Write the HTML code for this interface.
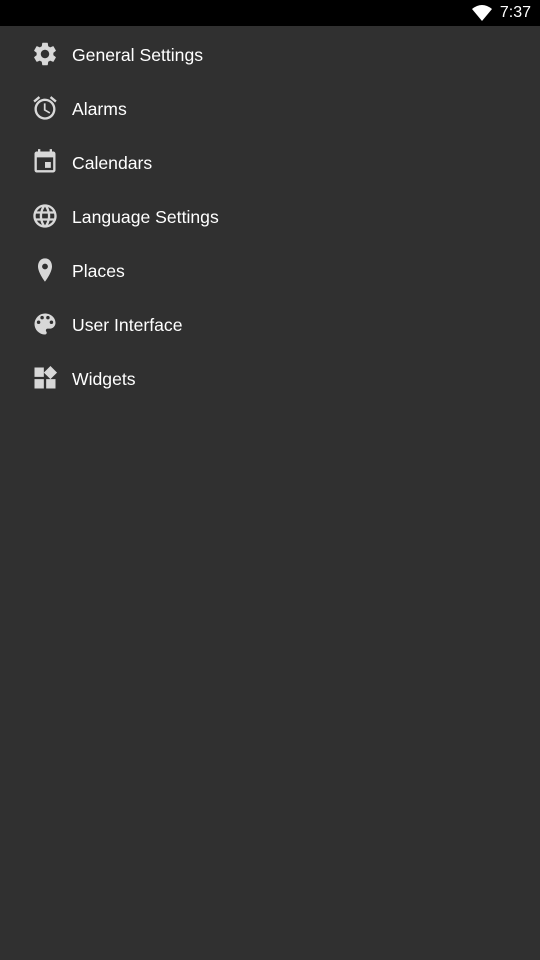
<!DOCTYPE html>
<html><head><style>
body{margin:0;width:540px;height:960px;background:#303030;font-family:"Liberation Sans",sans-serif;overflow:hidden;position:relative}
.sb{height:26px;background:#000;position:relative}
.sb span{position:absolute;right:9px;top:4px;color:#fff;font-size:16px}
.sb svg{position:absolute;left:472px;top:5px}
.row{position:absolute;left:0;height:54px;width:540px}
.row svg{position:absolute;left:31px;top:13px;width:28px;height:28px;fill:#d8d8d8}
.row div{position:absolute;left:72px;top:18px;color:#fff;font-size:17.6px}
</style></head><body>
<div class="sb"><svg width="20" height="16" viewBox="0 0 20 16"><path d="M10 16L0 4Q10-4 20 4Z" fill="#fff"/></svg><span>7:37</span></div>
<div class="row" style="top:27px"><svg viewBox="0 0 24 24"><path d="M19.14 12.94c.04-.3.06-.61.06-.94 0-.32-.02-.64-.07-.94l2.03-1.58a.49.49 0 0 0 .12-.61l-1.92-3.32a.49.49 0 0 0-.59-.22l-2.39.96c-.5-.38-1.03-.7-1.620-.94l-.36-2.54a.48.48 0 0 0-.48-.41h-3.84c-.24 0-.43.17-.47.41l-.36 2.54c-.59.24-1.13.57-1.62.94l-2.39-.96a.48.48 0 0 0-.59.22L2.74 8.87c-.12.21-.08.47.12.61l2.03 1.58c-.05.3-.09.63-.09.94s.02.64.07.94l-2.03 1.58a.49.49 0 0 0-.12.61l1.92 3.32c.12.22.37.29.59.22l2.39-.96c.5.38 1.03.7 1.62.94l.36 2.54c.05.24.24.41.48.41h3.84c.24 0 .44-.17.47-.41l.36-2.54c.59-.24 1.13-.56 1.62-.94l2.39.96c.22.08.47 0 .59-.22l1.92-3.32c.12-.22.07-.47-.12-.61l-2.010-1.58zM12 15.6c-1.98 0-3.6-1.62-3.6-3.6s1.62-3.6 3.6-3.6 3.6 1.62 3.6 3.6-1.62 3.6-3.6 3.6z"/></svg><div>General Settings</div></div>
<div class="row" style="top:81px"><svg viewBox="0 0 24 24"><path d="M22 5.72l-4.6-3.86-1.29 1.53 4.6 3.86L22 5.72zM7.88 3.39L6.6 1.86 2 5.71l1.29 1.53 4.59-3.85zM12.5 8H11v6l4.75 2.85.75-1.23-4-2.37V8zM12 4c-4.97 0-9 4.03-9 9s4.02 9 9 9a9 9 0 0 0 0-18zm0 16c-3.87 0-7-3.130-7-7s3.13-7 7-7 7 3.13 7 7-3.13 7-7 7z"/></svg><div>Alarms</div></div>
<div class="row" style="top:135px"><svg viewBox="0 0 24 24"><path d="M17 12h-5v5h5v-5zM16 1v2H8V1H6v2H5c-1.11 0-1.99.9-1.99 2L3 19a2 2 0 0 0 2 2h14c1.1 0 2-.9 2-2V5c0-1.1-.9-2-2-2h-1V1h-2zm3 18H5V8h14v11z"/></svg><div>Calendars</div></div>
<div class="row" style="top:189px"><svg viewBox="0 0 24 24"><path d="M11.99 2C6.47 2 2 6.48 2 12s4.47 10 9.99 10C17.52 22 22 17.52 22 12S17.52 2 11.99 2zm6.93 6h-2.95a15.65 15.65 0 0 0-1.38-3.56A8.030 8.03 0 0 1 18.92 8zM12 4.04c.83 1.2 1.48 2.53 1.91 3.96h-3.82c.43-1.43 1.08-2.76 1.91-3.960zM4.26 14C4.1 13.36 4 12.69 4 12s.1-1.36.26-2h3.38c-.08.66-.14 1.32-.14 2 0 .68.06 1.34.14 2H4.26zm.82 2h2.95c.32 1.25.78 2.45 1.38 3.56A7.99 7.99 0 0 1 5.08 16zm2.95-8H5.08a7.99 7.99 0 0 1 4.33-3.56A15.65 15.65 0 0 0 8.03 8zM12 19.96c-.83-1.2-1.48-2.53-1.91-3.96h3.82c-.43 1.43-1.08 2.76-1.91 3.96zM14.34 14H9.66c-.09-.66-.16-1.32-.16-2 0-.68.07-1.35.16-2h4.68c.09.65.16 1.32.16 2 0 .68-.07 1.34-.16 2zm.25 5.56c.6-1.11 1.06-2.31 1.38-3.56h2.95a8.03 8.03 0 0 1-4.33 3.56zM16.36 14c.08-.66.14-1.32.14-2 0-.68-.06-1.34-.14-2h3.38c.16.64.26 1.31.26 2s-.1 1.36-.26 2h-3.38z"/></svg><div>Language Settings</div></div>
<div class="row" style="top:243px"><svg viewBox="0 0 24 24"><path d="M12 2C8.13 2 6 5.13 6 9c0 5.25 6 13 6 13s6-7.75 6-13c0-3.87-2.13-7-6-7zm0 9.5a2.5 2.5 0 0 1 0-5 2.5 2.5 0 0 1 0 5z"/></svg><div>Places</div></div>
<div class="row" style="top:297px"><svg viewBox="0 0 24 24"><path d="M12 3a9 9 0 0 0 0 18c.83 0 1.5-.67 1.5-1.5 0-.39-.15-.74-.39-1.01-.23-.26-.38-.61-.38-.99 0-.83.67-1.5 1.5-1.5H16c2.76 0 5-2.24 5-5 0-4.42-4.03-8-9-8zm-5.5 9a1.5 1.5 0 1 1 0-3 1.5 1.5 0 0 1 0 3zm3-4a1.5 1.5 0 1 1 0-3 1.5 1.5 0 0 1 0 3zm5 0a1.5 1.5 0 1 1 0-3 1.5 1.5 0 0 1 0 3zm3 4a1.5 1.5 0 1 1 0-3 1.5 1.5 0 0 1 0 3z"/></svg><div>User Interface</div></div>
<div class="row" style="top:351px"><svg viewBox="0 0 24 24"><path d="M13 13v8h8v-8h-8zM3 21h8v-8H3v8zM3 3v8h8V3H3zm13.66-1.31L11 7.34 16.66 13l5.66-5.66-5.66-5.65z"/></svg><div>Widgets</div></div>
</body></html>
